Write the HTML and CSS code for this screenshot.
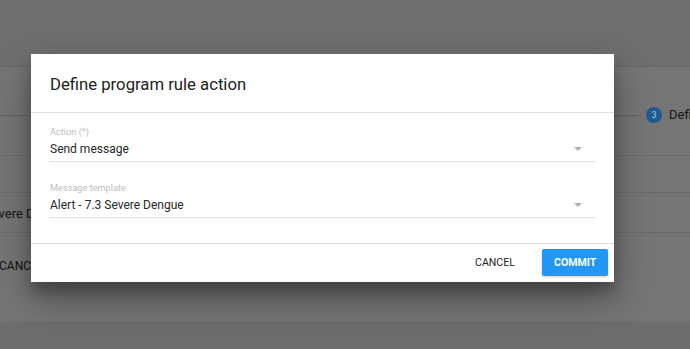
FILE: index.html
```html
<!DOCTYPE html>
<html>
<head>
<meta charset="utf-8">
<link rel="stylesheet" href="styles.css">
</head>
<body>
<div class="page">
  <div class="header"></div>
  <div class="card">
    <div class="stepper">
      <div class="connector"></div>
      <div class="step-circle">3</div>
      <div class="step-label">Define program rule action</div>
    </div>
    <div class="row row-a"></div>
    <div class="row row-b"><span class="cell-text">Severe Dengue</span></div>
    <div class="row row-c"><span class="cell-btn">CANCEL</span></div>
  </div>
</div>

<div class="dialog">
  <div class="dialog-title">Define program rule action</div>
  <div class="dialog-body">
    <div class="field">
      <div class="field-label">Action (*)</div>
      <div class="field-value"><span>Send message</span><span class="arrow"></span></div>
    </div>
    <div class="field field-second">
      <div class="field-label">Message template</div>
      <div class="field-value"><span>Alert - 7.3 Severe Dengue</span><span class="arrow"></span></div>
    </div>
  </div>
  <div class="dialog-footer">
    <button class="btn btn-flat">CANCEL</button>
    <button class="btn btn-primary">COMMIT</button>
  </div>
</div>
</body>
</html>
```

FILE: styles.css
```css
html, body {
  margin: 0;
  padding: 0;
}
* {
  box-sizing: border-box;
}
body {
  width: 690px;
  height: 349px;
  overflow: hidden;
  background: #6d6d6d;
  font-family: Roboto, "Liberation Sans", sans-serif;
  position: relative;
}
.page {
  display: flex;
  flex-direction: column;
}
.header {
  height: 67px;
  background: #6e6e6e;
  border-bottom: 1px solid #686868;
}
.card {
  background: #757575;
  display: flex;
  flex-direction: column;
}
.stepper {
  height: 89px;
  border-bottom: 1px solid #6b6b6b;
  display: flex;
  align-items: flex-start;
  white-space: nowrap;
  overflow: hidden;
  padding-top: 40px;
}
.connector {
  width: 638px;
  flex: none;
  height: 1px;
  background: #606060;
  margin-top: 8px;
  margin-right: 8px;
}
.step-circle {
  flex: none;
  width: 16px;
  height: 16px;
  border-radius: 50%;
  background: #1c5a92;
  color: #b9c6d2;
  font-size: 9px;
  line-height: 16px;
  text-align: center;
}
.step-label {
  margin-left: 7px;
  font-size: 13px;
  line-height: 16px;
  color: #141414;
}
.row {
  border-bottom: 1px solid #696969;
  display: flex;
  align-items: center;
  white-space: nowrap;
}
.row-a { height: 37px; }
.row-b { height: 40px; padding-top: 2px; }
.row-c { height: 90px; align-items: flex-start; padding-top: 26px; }
.cell-text {
  margin-left: -16px;
  font-size: 13px;
  color: #151515;
}
.cell-btn {
  margin-left: -1px;
  font-size: 12px;
  color: #111;
}

.dialog {
  position: absolute;
  left: 31px;
  top: 54px;
  width: 583px;
  height: 228px;
  background: #fff;
  box-shadow: 0 16px 34px rgba(0, 0, 0, 0.32), 0 10px 12px rgba(0, 0, 0, 0.22);
  display: flex;
  flex-direction: column;
}
.dialog-title {
  height: 59px;
  padding: 20px 18px 0 19px;
  font-size: 16.7px;
  line-height: 22px;
  color: #212121;
  border-bottom: 1px solid #dcdcdc;
}
.dialog-body {
  flex: 1;
  padding: 13px 18px 0 18px;
}
.field {
  border-bottom: 1px solid #e0e0e0;
  padding-bottom: 4px;
}
.field-second {
  margin-top: 20px;
}
.field-label {
  font-size: 9.2px;
  line-height: 12px;
  color: #bdbdbd;
  padding-left: 1px;
}
.field-value {
  margin-top: 3px;
  font-size: 12px;
  line-height: 16px;
  color: #262626;
  display: flex;
  justify-content: space-between;
  align-items: center;
  padding-left: 1px;
}
.arrow {
  width: 0;
  height: 0;
  border-left: 4px solid transparent;
  border-right: 4px solid transparent;
  border-top: 4px solid #b0b0b0;
  margin-right: 14px;
}
.dialog-footer {
  height: 39px;
  border-top: 1px solid #dcdcdc;
  display: flex;
  justify-content: flex-end;
  align-items: flex-start;
  padding: 5px 6px 0 0;
  gap: 15px;
}
.btn {
  font-family: Roboto, "Liberation Sans", sans-serif;
  font-size: 10.6px;
  border: none;
  height: 27px;
  padding: 0 12px;
  border-radius: 2px;
  cursor: pointer;
}
.btn-flat {
  background: transparent;
  color: #1e1e1e;
}
.btn-primary {
  width: 66px;
  background: #2196f3;
  color: #fff;
  font-weight: 700;
  box-shadow: 0 1px 3px rgba(0, 0, 0, 0.2);
}
```
